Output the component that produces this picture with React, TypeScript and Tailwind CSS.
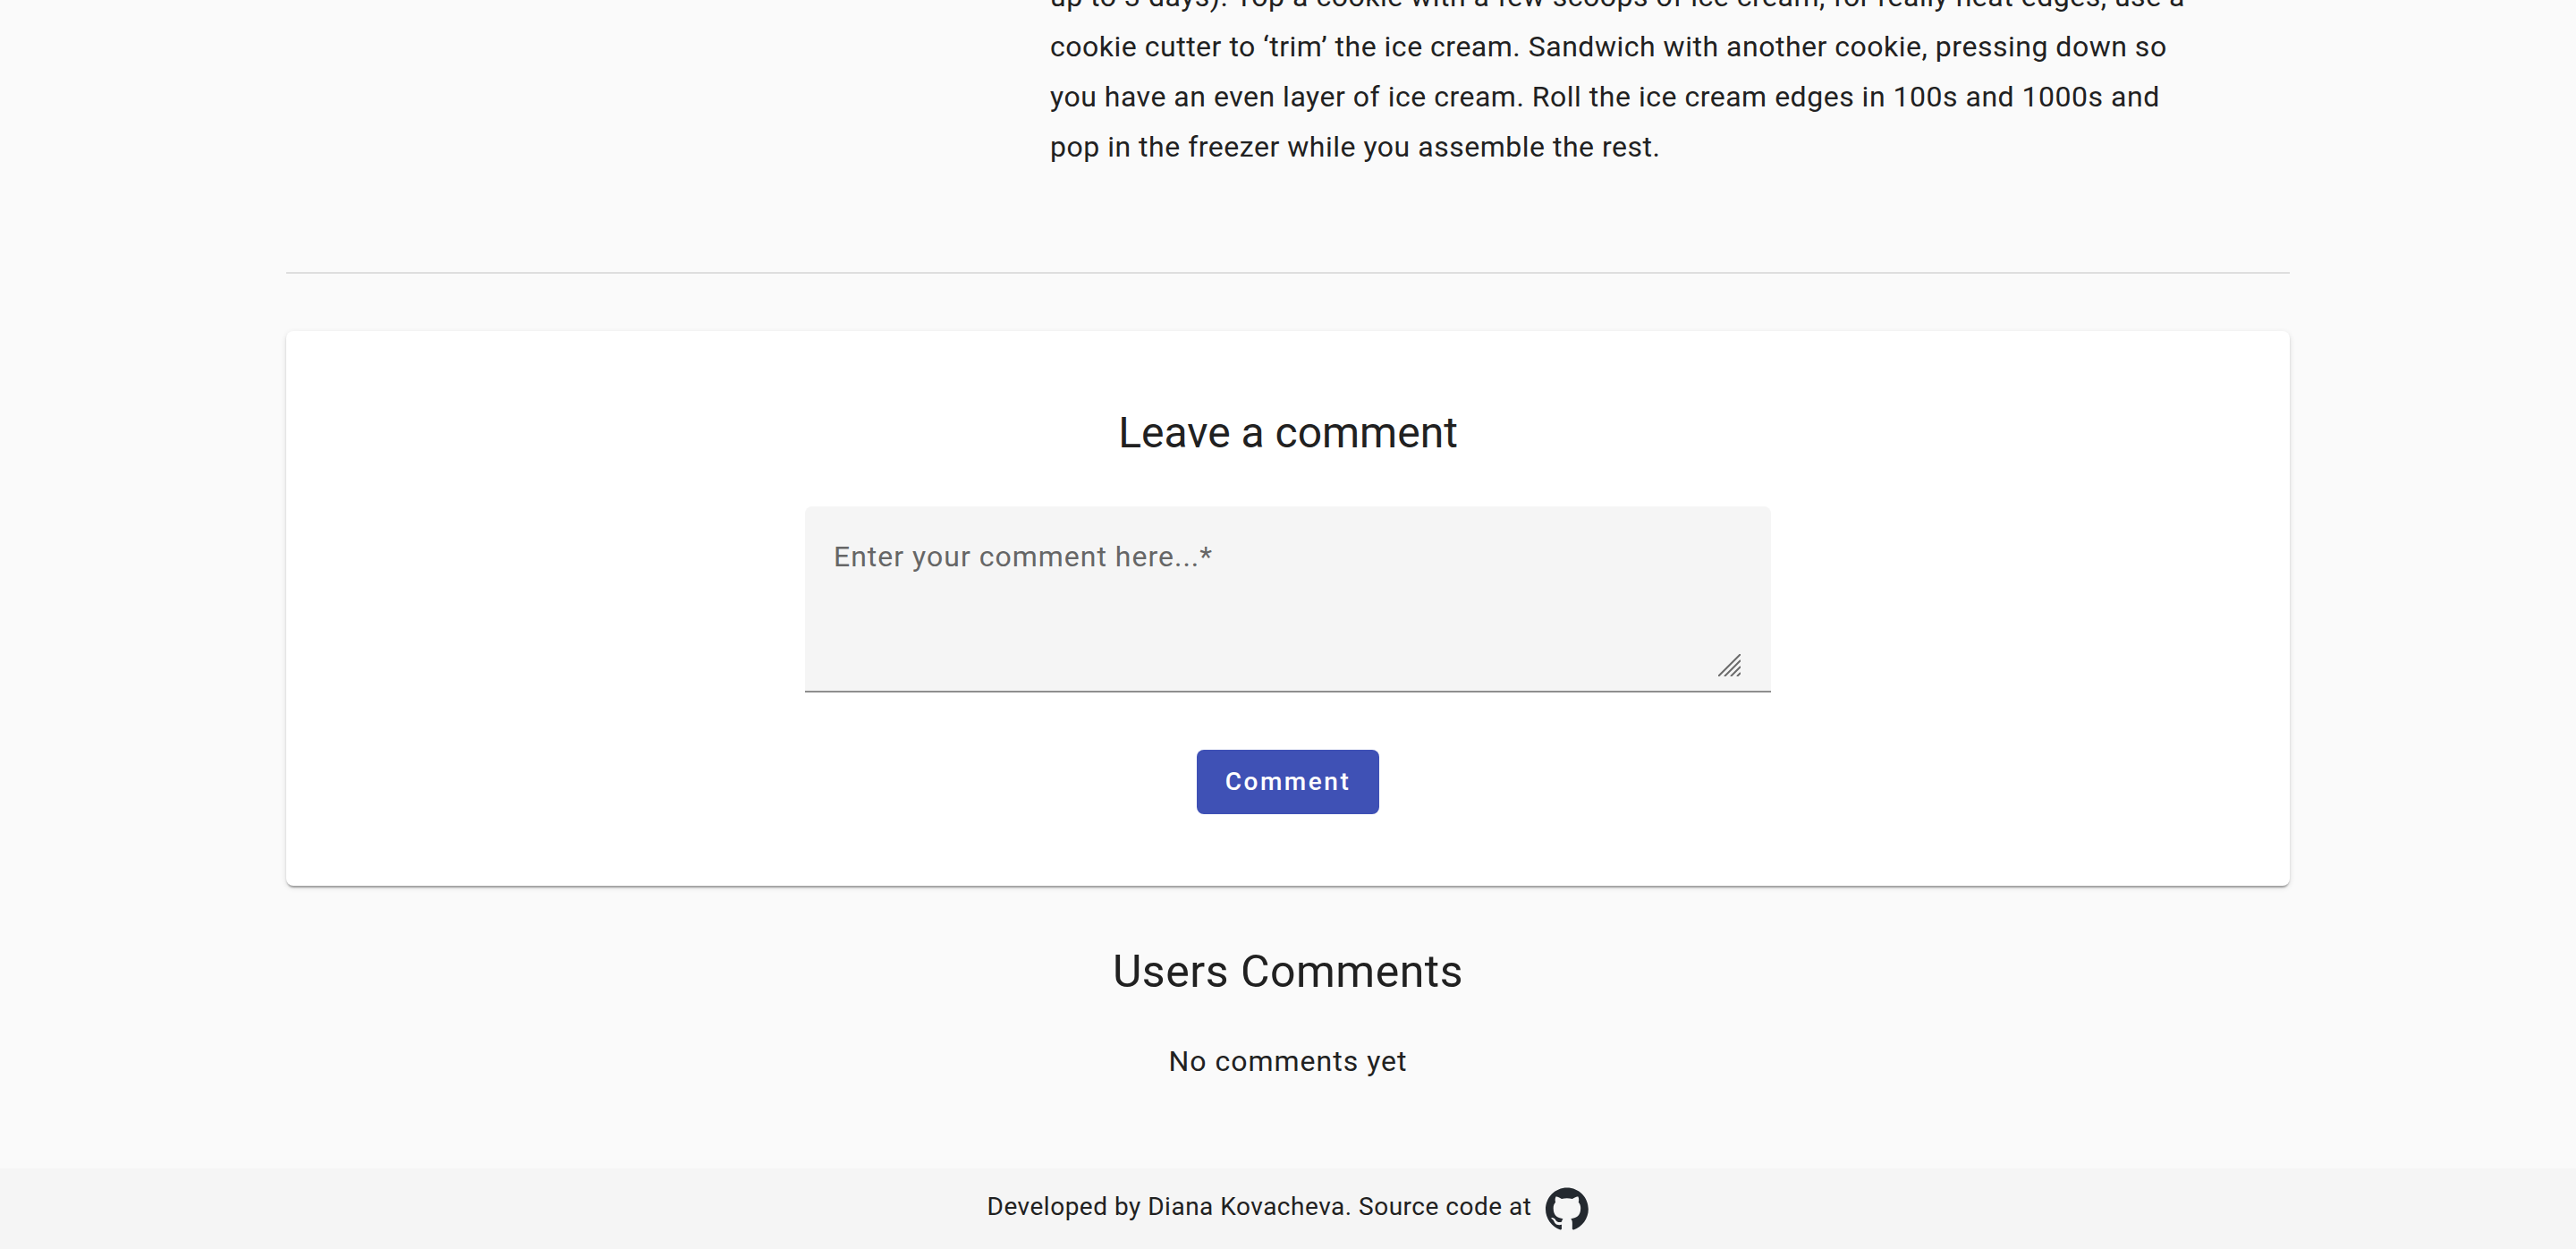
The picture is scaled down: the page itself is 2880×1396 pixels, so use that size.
const instructions =
  'up to 3 days). Top a cookie with a few scoops of ice cream, for really neat edges, use a cookie cutter to ‘trim’ the ice cream. Sandwich with another cookie, pressing down so you have an even layer of ice cream. Roll the ice cream edges in 100s and 1000s and pop in the freezer while you assemble the rest.';

function GithubMark() {
  return (
    <svg viewBox="0 0 98 96" className="size-12" fill="#24292f" aria-hidden="true">
      <path
        fillRule="evenodd"
        clipRule="evenodd"
        d="M48.854 0C21.839 0 0 22 0 49.217c0 21.756 13.993 40.172 33.405 46.69 2.427.49 3.316-1.059 3.316-2.362 0-1.141-.08-5.052-.08-9.127-13.59 2.934-16.42-5.867-16.42-5.867-2.184-5.704-5.42-7.17-5.42-7.17-4.448-3.015.324-3.015.324-3.015 4.934.326 7.523 5.052 7.523 5.052 4.367 7.496 11.404 5.378 14.235 4.074.404-3.178 1.699-5.378 3.074-6.6-10.839-1.141-22.243-5.378-22.243-24.283 0-5.378 1.94-9.778 5.014-13.2-.485-1.222-2.184-6.275.486-13.038 0 0 4.125-1.304 13.426 5.052a46.97 46.97 0 0 1 12.214-1.63c4.125 0 8.33.571 12.213 1.63 9.302-6.356 13.427-5.052 13.427-5.052 2.67 6.763.97 11.816.485 13.038 3.155 3.422 5.015 7.822 5.015 13.2 0 18.905-11.404 23.06-22.324 24.283 1.78 1.548 3.316 4.481 3.316 9.126 0 6.6-.08 11.897-.08 13.526 0 1.304.89 2.853 3.316 2.364 19.412-6.52 33.405-24.935 33.405-46.691C97.707 22 75.788 0 48.854 0z"
      />
    </svg>
  );
}

function ResizeGrip() {
  return (
    <svg
      viewBox="0 0 25 25"
      className="pointer-events-none absolute right-[34px] bottom-[18px] size-[25px]"
      stroke="#6b6b6b"
      strokeWidth="2"
      aria-hidden="true"
    >
      <path d="M0 25L25 0M7 25L25 7M14 25L25 14M21 25L25 21" />
    </svg>
  );
}

export default function App() {
  return (
    <div className="flex min-h-screen flex-col overflow-hidden bg-[#fafafa] font-[Roboto,sans-serif] text-[32px] tracking-[0.016em] text-[#212121]">
      <main className="mx-auto w-7/9 grow">
        <section className="-mt-8 flex justify-end">
          <p className="w-[1386px] pr-[100px] leading-[56px]">{instructions}</p>
        </section>
        <hr className="mt-28 border-t-2 border-[#dedede]" />

        <section className="mt-16 rounded-lg bg-white pt-[82px] pb-20 shadow-[0_4px_2px_-2px_rgba(0,0,0,0.2),0_2px_2px_0_rgba(0,0,0,0.14),0_2px_6px_0_rgba(0,0,0,0.12)]">
          <h2 className="text-center text-5xl leading-[64px] tracking-normal">Leave a comment</h2>
          <form className="mt-[50px] flex flex-col items-center gap-16" onSubmit={(e) => e.preventDefault()}>
            <div className="relative w-[1080px]">
              <textarea
                required
                aria-label="Enter your comment here"
                placeholder="Enter your comment here...*"
                className="block h-52 w-full resize-none rounded-t-lg border-b-2 border-[#8f8f8f] bg-[#f5f5f5] p-8 leading-[48px] tracking-[1px] outline-none placeholder:text-[#666666]"
              />
              <ResizeGrip />
            </div>
            <button
              type="submit"
              className="h-[72px] rounded-lg bg-[#3f51b5] px-8 text-[28px] font-medium tracking-[0.09em] text-white"
            >
              Comment
            </button>
          </form>
        </section>

        <section className="text-center">
          <h2 className="mt-16 text-[50px] leading-[64px]">Users Comments</h2>
          <p className="mt-11 leading-[48px] tracking-[1px]">No comments yet</p>
        </section>
      </main>

      <footer className="flex h-[90px] items-center justify-center gap-4 bg-[#f5f5f5] text-[28px] tracking-[0.018em]">
        <p className="pb-1">Developed by Diana Kovacheva. Source code at</p>
        <a href="#" aria-label="GitHub">
          <GithubMark />
        </a>
      </footer>
    </div>
  );
}
